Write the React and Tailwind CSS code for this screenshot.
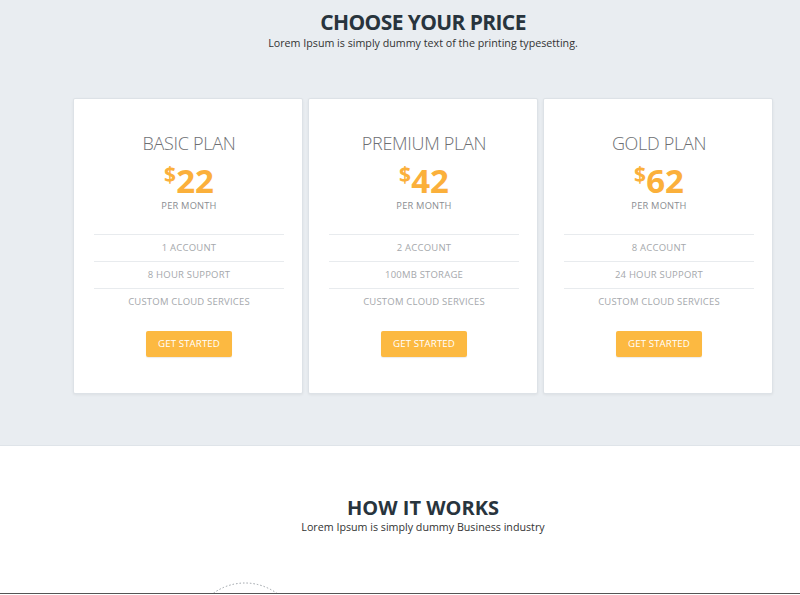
import React from "react";

const plans = [
  { name: "BASIC PLAN", price: "22", features: ["1 ACCOUNT", "8 HOUR SUPPORT", "CUSTOM CLOUD SERVICES"] },
  { name: "PREMIUM PLAN", price: "42", features: ["2 ACCOUNT", "100MB STORAGE", "CUSTOM CLOUD SERVICES"] },
  { name: "GOLD PLAN", price: "62", features: ["8 ACCOUNT", "24 HOUR SUPPORT", "CUSTOM CLOUD SERVICES"] },
];

const PlanCard = ({ plan }) => (
  <div className="w-[230px] h-[296px] bg-white border border-[#dde2e7] rounded-[2px] shadow-[0_1px_3px_rgba(0,0,0,0.06)] flex flex-col items-center pl-[20px] pr-[18px]">
    <h3 className="mt-[33px] text-[18px] leading-[22px] font-light text-[#6d6f73] tracking-[-0.3px]">{plan.name}</h3>
    <div className="mt-[11px] flex items-start text-[#fbb03b] font-bold">
      <span className="text-[21px] leading-[21px] -mt-[1px]">$</span>
      <span className="text-[33px] leading-[32px]">{plan.price}</span>
    </div>
    <div className="mt-[3px] text-[9.3px] leading-[12px] text-[#8a8d91] tracking-[0.2px]">PER MONTH</div>
    <ul className="mt-[22px] w-full">
      {plan.features.map((f, i) => (
        <li key={i} className="border-t border-[#e8ebee] h-[27px] flex items-center justify-center text-[9.5px] text-[#a5a8ac] tracking-[0.2px]">{f}</li>
      ))}
    </ul>
    <button className="mt-[16px] w-[86px] h-[26px] bg-[#fcb941] rounded-[2px] text-white text-[9.7px] tracking-[0.1px] shadow-[0_1px_1px_rgba(0,0,0,0.08)]">GET STARTED</button>
  </div>
);

const App = () => {
  return (
    <div className="w-[800px] h-[595px] overflow-hidden bg-white font-['Open_Sans',sans-serif]">
      <section className="h-[446px] bg-[#e9edf1] border-b border-[#dfe4e9] pt-[8px]">
        <div className="ml-[72px] w-[702px] flex flex-col items-center">
          <h2 className="text-[21px] leading-[28px] font-bold text-[#28343d] tracking-[-0.6px]">CHOOSE YOUR PRICE</h2>
          <p className="text-[10.7px] leading-[14px] text-[#333]">Lorem Ipsum is simply dummy text of the printing typesetting.</p>
          <div className="mt-[48px] flex gap-[5px]">
            {plans.map((p) => (
              <PlanCard key={p.name} plan={p} />
            ))}
          </div>
        </div>
      </section>
      <section className="relative h-[148px] overflow-hidden border-b border-[#555]">
        <div className="ml-[73px] w-[700px] pt-[50px] flex flex-col items-center">
          <h2 className="text-[20px] leading-[24px] font-bold text-[#28343d]">HOW IT WORKS</h2>
          <p className="text-[10.7px] leading-[14px] text-[#333]">Lorem Ipsum is simply dummy Business industry</p>
        </div>
        <svg className="absolute left-[185px] top-[131px]" width="120" height="120" viewBox="0 0 120 120">
          <circle cx="60" cy="60" r="54" fill="none" stroke="#9aa0a6" strokeWidth="1" strokeDasharray="1.5 2" />
        </svg>
      </section>
    </div>
  );
};

export default App;
